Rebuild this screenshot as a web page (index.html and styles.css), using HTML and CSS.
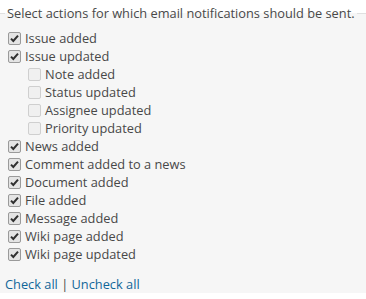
FILE: index.html
```html
<!DOCTYPE html>
<html>
<head>
<meta charset="utf-8">
<link rel="stylesheet" href="styles.css">
</head>
<body>
<fieldset class="box">
  <legend class="box-title">Select actions for which email notifications should be sent.</legend>
  <div class="list">
    <label class="item"><input type="checkbox" class="cb" checked> Issue added</label>
    <label class="item"><input type="checkbox" class="cb" checked> Issue updated</label>
    <label class="item sub"><input type="checkbox" class="cb" disabled> Note added</label>
    <label class="item sub"><input type="checkbox" class="cb" disabled> Status updated</label>
    <label class="item sub"><input type="checkbox" class="cb" disabled> Assignee updated</label>
    <label class="item sub"><input type="checkbox" class="cb" disabled> Priority updated</label>
    <label class="item"><input type="checkbox" class="cb" checked> News added</label>
    <label class="item"><input type="checkbox" class="cb" checked> Comment added to a news</label>
    <label class="item"><input type="checkbox" class="cb" checked> Document added</label>
    <label class="item"><input type="checkbox" class="cb" checked> File added</label>
    <label class="item"><input type="checkbox" class="cb" checked> Message added</label>
    <label class="item"><input type="checkbox" class="cb" checked> Wiki page added</label>
    <label class="item"><input type="checkbox" class="cb" checked> Wiki page updated</label>
  </div>
  <p class="links"><a href="#">Check all</a> | <a href="#">Uncheck all</a></p>
</fieldset>
</body>
</html>
```
FILE: styles.css
```css
html, body {
  margin: 0;
  padding: 0;
  background: #ffffff;
}
body {
  font-family: "Open Sans", "DejaVu Sans", sans-serif;
  font-size: 12.8px;
  color: #484848;
}
.box {
  margin: 0;
  padding: 0 0 0 5px;
  border: none;
  border-top: 1px solid #e0e0e0;
  background: #f6f6f6;
  min-height: 290px;
  min-width: 0;
}
.box-title {
  padding: 0 2px;
  line-height: 26px;
  color: #484848;
}
.list {
  padding: 3px 0 0 3px;
  display: flex;
  flex-direction: column;
}
.item {
  display: flex;
  align-items: center;
  height: 18px;
  line-height: 18px;
  white-space: nowrap;
}
.item.sub {
  padding-left: 20px;
}
.cb {
  -webkit-appearance: none;
  appearance: none;
  margin: 0 4px 0 0;
  width: 13px;
  height: 13px;
  box-sizing: border-box;
  border: 1px solid #a8a8a8;
  border-radius: 2px;
  background-color: #ececec;
  flex: none;
}
.cb:checked {
  background-color: #e4e4e4;
  border-color: #9a9a9a;
  background-image: url("data:image/svg+xml,%3Csvg xmlns='http://www.w3.org/2000/svg' width='11' height='11' viewBox='0 0 11 11'%3E%3Cpath d='M2 5.6 L4.3 8 L9 2.6' fill='none' stroke='%23303030' stroke-width='2'/%3E%3C/svg%3E");
  background-repeat: no-repeat;
  background-position: center;
}
.cb:disabled {
  border-color: #cfcfcf;
  background-color: #f0f0f0;
}
.links {
  margin: 12px 0 0 0;
  line-height: 18px;
}
.links a {
  color: #116699;
  text-decoration: none;
}
```
